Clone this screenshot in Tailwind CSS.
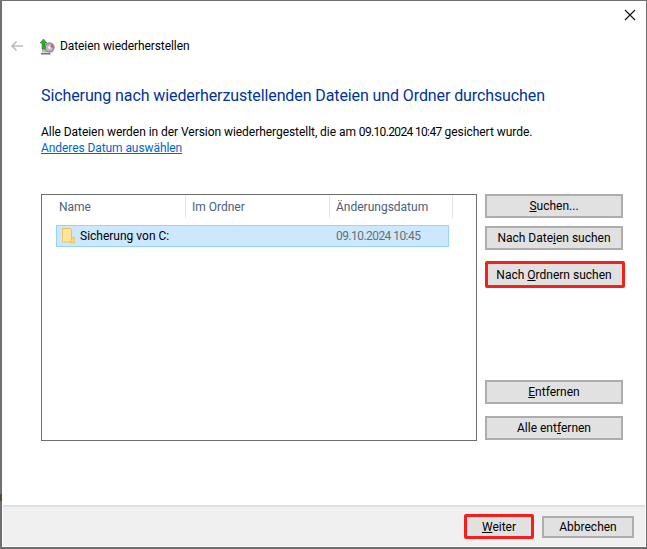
<!DOCTYPE html>
<html lang="de">
<head>
<meta charset="UTF-8" />
<title>Dateien wiederherstellen</title>
<script src="https://cdn.jsdelivr.net/npm/@tailwindcss/browser@4"></script>
</head>
<body class="bg-white overflow-hidden">
  <div class="relative w-[647px] h-[549px] flex flex-col border-t border-l-2 border-b-2 border-r border-[#707070] bg-white text-[12px] text-black font-['Roboto','Noto_Sans',sans-serif]">
    <div class="absolute -left-[2px] top-[493px] w-[2px] h-[7px] bg-[#5a4a3a]"></div>

    <!-- Title bar -->
    <div class="h-[30px] flex justify-end items-start pt-[8px] pr-[10px]">
      <svg width="12" height="12" viewBox="0 0 12 12" fill="none" stroke="#111" stroke-width="1.1"><path d="M1 1l10 10M11 1L1 11"/></svg>
    </div>

    <!-- Nav row -->
    <div class="h-[30px] flex items-center pl-[8px]">
      <svg width="14" height="12" viewBox="0 0 14 12" fill="none" stroke="#bdbdbd" stroke-width="1.6"><path d="M13 6H2M6.500 1.500L2 6l4.500 4.500"/></svg>
      <svg class="ml-[15px]" width="17" height="17" viewBox="0 0 17 17">
        <path d="M2 15h9l1 1.500H2z" fill="#6f7570"/>
        <path d="M3 8.500h5v6H3z" fill="#b9bdb8"/>
        <circle cx="10.500" cy="9.500" r="5.200" fill="#8d93a8"/>
        <circle cx="10.500" cy="9.500" r="3.500" fill="#c9b7c4"/>
        <path d="M10.500 9.500L13 6.500l1.500 3z" fill="#c8584a"/>
        <circle cx="10.500" cy="9.500" r="1.200" fill="#fff"/>
        <path d="M4.500 1L1 5h2v6h3V5h2z" fill="#3fa535" stroke="#1d6e1a" stroke-width=".5"/>
      </svg>
      <span class="ml-[4px] tracking-[-0.08px]">Dateien wiederherstellen</span>
    </div>

    <!-- Content -->
    <div class="flex-1 pl-[39px] pr-[22px] flex flex-col">
      <h1 class="mt-[24px] text-[16px] leading-[22px] text-[#003399] font-normal tracking-[-0.1px]">Sicherung nach wiederherzustellenden Dateien und Ordner durchsuchen</h1>
      <p class="mt-[17px] leading-[16px] tracking-[-0.05px]">Alle Dateien werden in der Version wiederhergestellt, die am <span class="tracking-[-0.65px]">09.10.2024 10:47</span> gesichert wurde.</p>
      <a class="leading-[16px] text-[#0066cc] underline tracking-[-0.08px]">Anderes Datum auswählen</a>

      <div class="mt-[38px] flex gap-[8px]">
        <!-- File list -->
        <div class="w-[436px] h-[247px] border border-[#6e6e6e] px-[14px]">
          <div class="h-[23px] flex text-[#4c607a]">
            <div class="w-[130px] pl-[3px] flex items-center border-r border-[#e5e5e5]">Name</div>
            <div class="w-[144px] pl-[6px] flex items-center border-r border-[#e5e5e5]">Im Ordner</div>
            <div class="w-[123px] pl-[6px] flex items-center border-r border-[#e5e5e5]">Änderungsdatum</div>
          </div>
          <div class="mt-[7px] h-[22px] w-[393px] flex items-center border border-[#99d1ff] bg-[#cce8ff]">
            <svg class="ml-[5px]" width="13" height="16" viewBox="0 0 13 16">
              <path d="M0.500 .5h8l1 1v12.500h-9.500z" fill="#ffe696" stroke="#e6c15e"/>
              <path d="M10 9.500h2.500v5.500h-4v-2z" fill="#f8d775" stroke="#e0b64e" stroke-width=".6"/>
            </svg>
            <span class="ml-[5px] w-[256px]">Sicherung von C:</span>
            <span class="text-[#6d6d6d] tracking-[-0.55px]">09.10.2024 10:45</span>
          </div>
        </div>

        <!-- Side buttons -->
        <div class="w-[138px] flex flex-col">
          <button class="h-[24px] border-2 border-[#adadad] bg-[#e1e1e1] flex items-center justify-center"><span><u>S</u>uchen...</span></button>
          <button class="mt-[8px] h-[24px] border-2 border-[#adadad] bg-[#e1e1e1] flex items-center justify-center"><span>Nach Date<u>i</u>en suchen</span></button>
          <button class="mt-[11px] h-[27px] w-[140px] pr-[2px] border-[3px] border-[#f5201c] rounded-[2px] bg-[#e1e1e1] flex items-center justify-center"><span>Nach <u>O</u>rdnern suchen</span></button>
          <button class="mt-[92px] h-[24px] border-2 border-[#adadad] bg-[#e1e1e1] flex items-center justify-center"><span><u>E</u>ntfernen</span></button>
          <button class="mt-[12px] h-[24px] border-2 border-[#adadad] bg-[#e1e1e1] flex items-center justify-center"><span>Alle ent<u>f</u>ernen</span></button>
        </div>
      </div>
    </div>

    <!-- Footer -->
    <div class="mx-[1px] mb-[1px] h-[41px] bg-[#f0f0f0] border-t-2 border-[#dfdfdf] flex items-center justify-end pr-[11px] gap-[8px]">
      <button class="w-[70px] h-[25px] border-[3px] border-[#f5201c] rounded-[2px] bg-[#e1e1e1] flex items-center justify-center"><span><u>W</u>eiter</span></button>
      <button class="w-[92px] h-[22px] border-2 border-[#adadad] bg-[#e1e1e1] flex items-center justify-center"><span>Abbrechen</span></button>
    </div>
  </div>
</body>
</html>
